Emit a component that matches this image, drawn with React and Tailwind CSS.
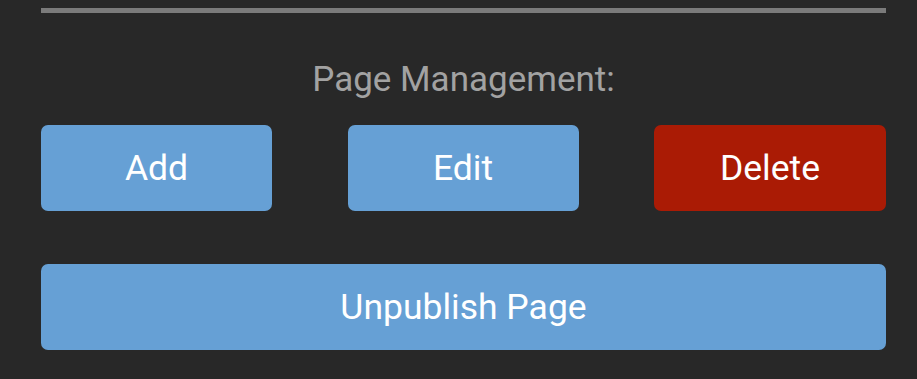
export default function App() {
  const btn = "h-[86px] rounded-[7px] flex items-center justify-center text-white text-[35.5px] leading-[40px]";
  return (
    <div className="w-[917px] h-[379px] bg-[#282828] overflow-hidden" style={{ fontFamily: "Roboto, 'Noto Sans', sans-serif" }}>
      <div className="ml-[41px] w-[845px] flex flex-col">
        <div className="mt-[8px] h-[5px] bg-[#7b7b7b]" />
        <div className="mt-[47px] h-[40px] text-center text-[35px] leading-[40px] text-[#a2a2a2]">Page Management:</div>
        <div className="mt-[25px] grid grid-cols-[231px_231px_232px] justify-between">
          <div className={`${btn} bg-[#66a0d5]`}>Add</div>
          <div className={`${btn} bg-[#66a0d5]`}>Edit</div>
          <div className={`${btn} bg-[#aa1b05]`}>Delete</div>
        </div>
        <div className={`mt-[53px] ${btn} bg-[#66a0d5]`}>Unpublish Page</div>
      </div>
    </div>
  );
}
